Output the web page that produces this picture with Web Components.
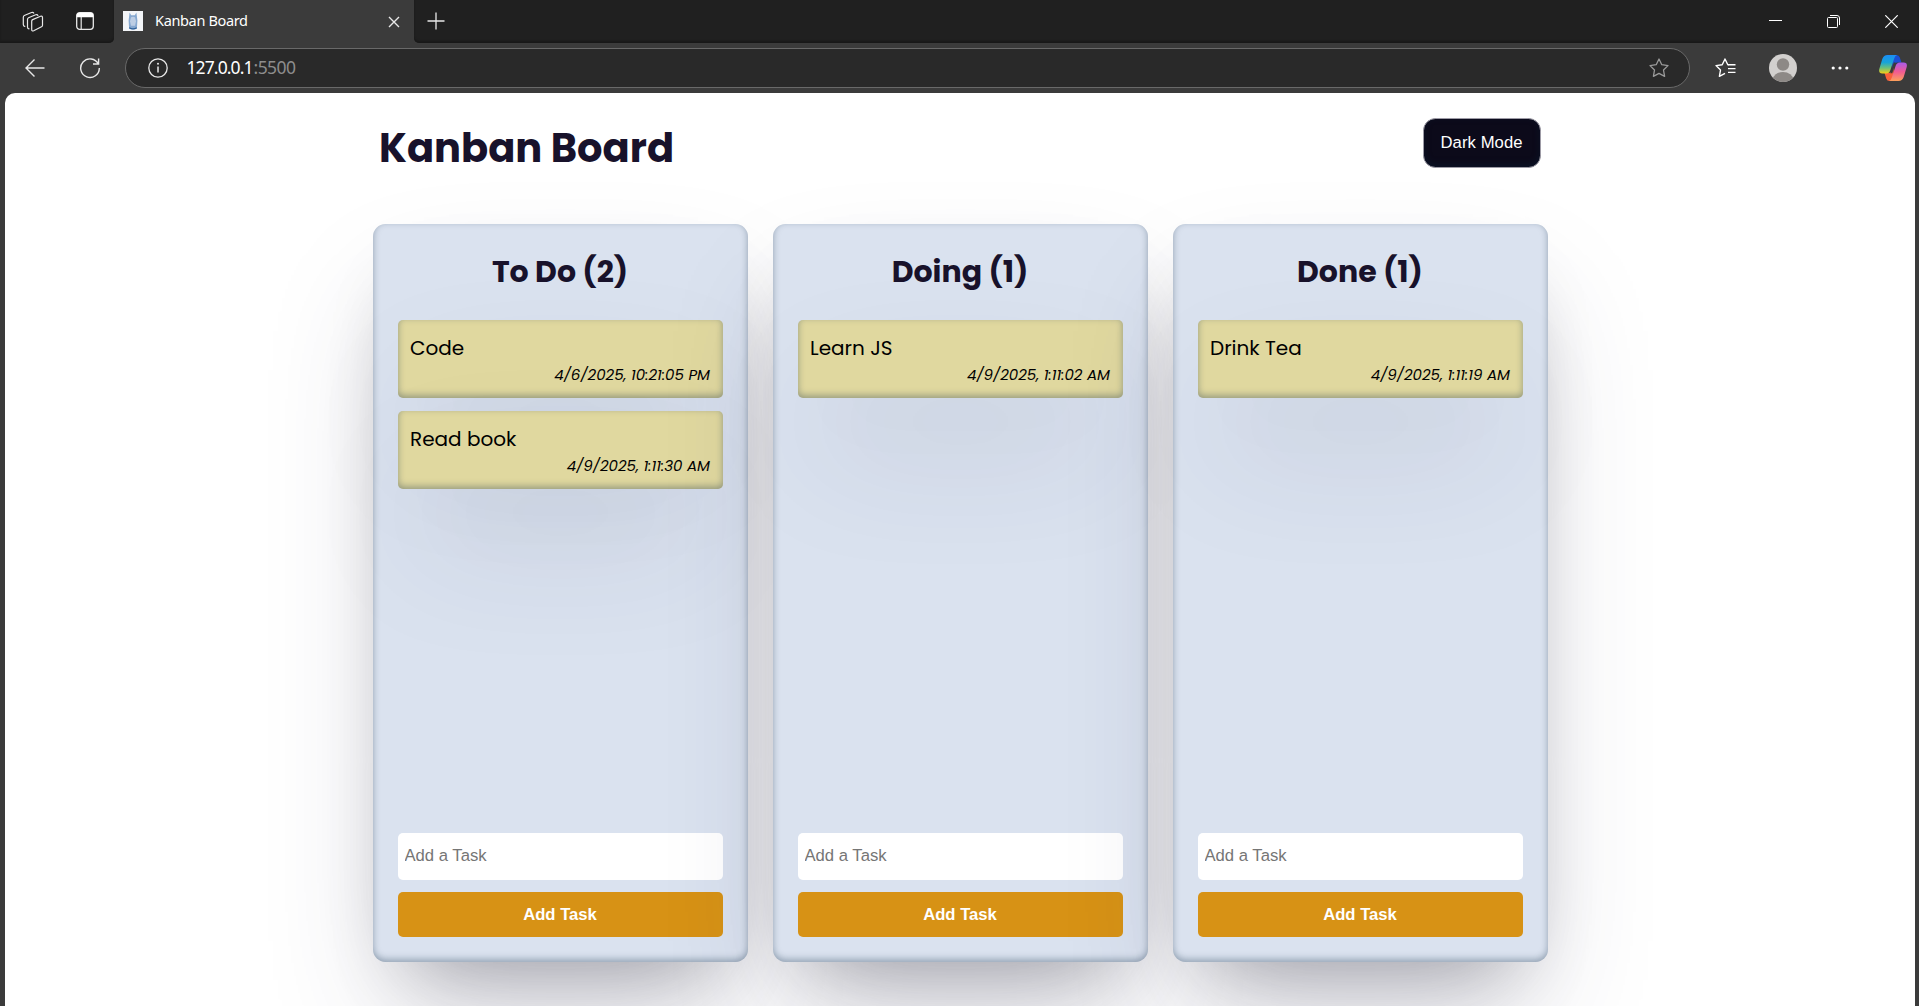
<!DOCTYPE html>
<html lang="en">
<head>
<meta charset="utf-8">
<title>Kanban Board</title>
<style>
html,body{margin:0;height:100%;overflow:hidden;background:#3b3b3b}
</style>
</head>
<body>
<browser-window>
  <kanban-board>
    <kanban-column heading="To Do (2)">
      <task-card label="Code" date="4/6/2025, 10:21:05 PM"></task-card>
      <task-card label="Read book" date="4/9/2025, 1:11:30 AM"></task-card>
    </kanban-column>
    <kanban-column heading="Doing (1)">
      <task-card label="Learn JS" date="4/9/2025, 1:11:02 AM"></task-card>
    </kanban-column>
    <kanban-column heading="Done (1)">
      <task-card label="Drink Tea" date="4/9/2025, 1:11:19 AM"></task-card>
    </kanban-column>
  </kanban-board>
</browser-window>
<script>
const SHADOW = 'rgba(50,50,93,.25) 0 62.5px 125px -25px,rgba(0,0,0,.3) 0 37.5px 75px -37.5px,rgba(10,37,64,.35) 0 -2.5px 7.5px 0 inset';

class Base extends HTMLElement {
  constructor() {
    super();
    this.attachShadow({ mode: 'open' });
  }
  connectedCallback() {
    this.shadowRoot.innerHTML = '<style>:host,*{box-sizing:border-box}' + this.css() + '</style>' + this.html();
  }
}

/* One line of text, tracked so that it fills the given width. */
class FitText extends Base {
  css() { return ':host{display:inline-block;white-space:nowrap}span{display:inline-block}'; }
  html() { return '<span></span>'; }
  connectedCallback() {
    super.connectedCallback();
    const s = this.shadowRoot.querySelector('span');
    const t = this.getAttribute('text');
    const w = +this.getAttribute('width');
    s.textContent = t;
    const gap = (w - s.getBoundingClientRect().width) / (t.length - 1);
    s.style.letterSpacing = gap + 'px';
    s.style.marginRight = -gap + 'px';
  }
}
customElements.define('fit-text', FitText);

class TaskCard extends Base {
  css() {
    return `:host{display:flex;flex-direction:column;flex:none;height:78px;padding:14px 12.5px 0;border-radius:5px;background:#e0d89f;color:#000;
      font-family:Poppins,Inter,sans-serif;box-shadow:${SHADOW}}
      .l{font-size:20px;line-height:28px;height:28px}
      .d{font-size:15px;line-height:26px;font-style:italic;text-align:right}`;
  }
  html() {
    const a = n => this.getAttribute(n);
    return `<div class="l">${a('label')}</div><div class="d">${a('date')}</div>`;
  }
}
customElements.define('task-card', TaskCard);

class KanbanColumn extends Base {
  css() {
    return `:host{display:flex;flex-direction:column;width:375px;height:738px;padding:25px;border-radius:12.5px;background:#dae2ef;box-shadow:${SHADOW}}
      h2{margin:0 0 26px;font:700 30px/45px Poppins,Inter,sans-serif;color:#18122b;text-align:center}
      .tasks{display:flex;flex-direction:column;gap:13px;flex:1}
      input{display:block;width:100%;height:47px;border:0;border-radius:5px;background:#fff;padding:0 7px 1px;font:16.667px "Liberation Sans",Arial,sans-serif;color:#000}
      input::placeholder{color:#757575}
      button{display:block;width:100%;height:45px;margin-top:12px;border:0;border-radius:5px;background:#d79215;color:#fff;font:700 16.667px "Liberation Sans",Arial,sans-serif;padding:0}`;
  }
  html() {
    return `<h2>${this.getAttribute('heading')}</h2>
      <div class="tasks"><slot></slot></div>
      <input placeholder="Add a Task"><button>Add Task</button>`;
  }
}
customElements.define('kanban-column', KanbanColumn);

class KanbanBoard extends Base {
  css() {
    return `:host{display:flex;flex-direction:column;width:1175px;margin:0 auto}
      header{display:flex;justify-content:space-between;align-items:flex-start;height:131px;padding:25px 7px 0 6.5px;flex:none}
      h1{margin:0;font:700 40px/60px Poppins,Inter,sans-serif;color:#18122b}
      button{width:118px;height:49.500px;border:1px solid #9d9ba6;border-radius:12.5px;background:#0c0a1a;color:#fff;font:16.667px "Liberation Sans",Arial,sans-serif;padding:0;
        box-shadow:rgba(10,37,64,.35) 0 -2.5px 7.5px 0 inset}
      main{display:flex;gap:25px}`;
  }
  html() {
    return `<header><h1>Kanban Board</h1><button><fit-text text="Dark Mode" width="82"></fit-text></button></header>
      <main><slot></slot></main>`;
  }
}
customElements.define('kanban-board', KanbanBoard);

const ICONS = {
  workspaces: [22, 22, '<g fill="none" stroke="#e8e8e8" stroke-width="1.2" stroke-linejoin="round" stroke-linecap="round"><path d="M9.700 10.200q0-1.100 1-1.600l7.800-3.300q2-.7 2 1.200v7.700q0 1.100-1 1.600l-7.800 3.900q-2 .9-2-1.200z"/><path d="M7 17.800q-1.500-.3-1.500-1.900V8.500q0-1.200 1-1.700l7.200-3q1.600-.6 2.200.6"/><path d="M2.800 15.300q-1.500-.3-1.500-1.900V6.200q0-1.200 1-1.700l7.200-3q1.600-.6 2.200.6"/></g>'],
  tabs: [18, 18, '<rect x=".7" y=".7" width="16.600" height="16.600" rx="3" fill="none" stroke="#e8e8e8" stroke-width="1.300"/><path d="M.7 5.200V3.500Q.7.700 3.500.700h11q2.800 0 2.800 2.800v1.700z" fill="#fff"/><path d="M5.200 5v12" stroke="#e8e8e8" stroke-width="1.200"/>'],
  favicon: [20, 20, '<rect width="20" height="20" fill="#f3f5f8"/><path d="M6.600 1.500 8.200 4.200h3.600l1.600-2.700 1 8-.5 8q-3.900 1.800-7.800 0l-.5-8z" fill="#86a8d0"/><path d="M8 6.300q2-1.300 4 0l1 4-1 4.500H8L7 10.300z" fill="#bccde4"/><path d="M6.200 16.800q3.800 2.200 7.600 0" stroke="#2f6099" stroke-width="1.300" fill="none"/>'],
  close: [12, 12, '<path d="m1 1 10 10M11 1 1 11" stroke="#e8e8e8" stroke-width="1.400"/>'],
  plus: [18, 18, '<path d="M9 .500v17M.500 9h17" stroke="#e8e8e8" stroke-width="1.300"/>'],
  back: [20, 20, '<path d="M19.500 10H1.200M9.500 1.500 1 10l8.500 8.500" fill="none" stroke="#e8e8e8" stroke-width="1.400"/>'],
  reload: [22, 22, '<path d="M19.300 7A9.300 9.300 0 1 0 20.300 11M19.600 1.500V7H14" fill="none" stroke="#e8e8e8" stroke-width="1.400"/>'],
  info: [20, 20, '<circle cx="10" cy="10" r="9.200" fill="none" stroke="#e8e8e8" stroke-width="1.300"/><path d="M10 8.500v6" stroke="#e8e8e8" stroke-width="1.500"/><circle cx="10" cy="5.800" r="1" fill="#e8e8e8"/>'],
  star: [20, 20, '<path d="m10 1 2.800 5.700 6.200.9-4.500 4.400 1.100 6.300L10 15.400l-5.600 2.900L5.500 12 1 7.600l6.200-.9z" fill="none" stroke="#9a9a9a" stroke-width="1.300" stroke-linejoin="round"/>'],
  favs: [21, 20, '<path d="M13.500 7 12.800 6.700 10 1 7.200 6.700 1 7.600l4.500 4.400-1.100 6.300 5.600-2.900" fill="none" stroke="#fff" stroke-width="1.400" stroke-linejoin="round"/><path d="M13 6.800H20.500M13 10.600H20.500M13 14.400H20.500" stroke="#fff" stroke-width="1.400"/>'],
  avatar: [28, 28, '<defs><clipPath id="c"><circle cx="14" cy="14" r="14"/></clipPath></defs><g clip-path="url(#c)"><rect width="28" height="28" fill="#d2d0ce"/><circle cx="14" cy="10.500" r="6.200" fill="#8d8986"/><ellipse cx="14" cy="25.500" rx="10.200" ry="7.500" fill="#8d8986"/></g>'],
  dots: [18, 4, '<g fill="#fff"><circle cx="2.200" cy="2" r="1.600"/><circle cx="9" cy="2" r="1.600"/><circle cx="15.800" cy="2" r="1.600"/></g>'],
  copilot: [28, 26, '<defs><linearGradient id="a" x1="0" y1="0" x2="0" y2="1"><stop offset="0" stop-color="#1b8df5"/><stop offset=".4" stop-color="#17a4d8"/><stop offset=".7" stop-color="#6cc07a"/><stop offset="1" stop-color="#f4cf15"/></linearGradient><linearGradient id="b" x1="0" y1="0" x2="0" y2="1"><stop offset="0" stop-color="#a85bea"/><stop offset=".5" stop-color="#f15a93"/><stop offset="1" stop-color="#fda05a"/></linearGradient></defs><path d="M13 0h4.500q2.500 0 3.300 2.500L22.500 7.500h-4q-3 0-4 3l-1 3z" fill="#1b4fd4"/><path d="M15 26h-4.500q-2.500 0-3.300-2.500L5.500 18h4q3 0 4-3l1-3z" fill="#f8603a"/><path d="M8.500 0H18q-2 .5-3 4l-3.600 11q-1 3.500-4.300 3.500H3.300Q-.7 18.500.3 14L3.300 4Q4.700 0 8.500 0z" fill="url(#a)"/><path d="M19.500 26H10q2-.5 3-4l3.600-11q1-3.500 4.300-3.500h3.800q4 0 3 4.500l-3 10q-1.400 4-5.200 4z" fill="url(#b)"/><path d="m14.700 7.500-3.300 10.800h1.900l3.300-10.800z" fill="#3b3b3b"/>'],
  min: [13, 13, '<path d="M0 5.500h13" stroke="#fff" stroke-width="1"/>'],
  restore: [13, 13, '<rect x=".500" y="2.500" width="10" height="10" rx="1" fill="none" stroke="#fff"/><path d="M3 .500h7q2.500 0 2.500 2.500v7" fill="none" stroke="#fff"/>'],
  winclose: [13, 13, '<path d="m.300.300 12.400 12.400M12.700.300.300 12.700" stroke="#fff" stroke-width="1.200"/>']
};
class UiIcon extends Base {
  css() { return ':host{display:block;flex:none}svg{display:block}'; }
  html() {
    const [w, h, body] = ICONS[this.getAttribute('name')];
    return `<svg width="${w}" height="${h}" viewBox="0 0 ${w} ${h}">${body}</svg>`;
  }
}
customElements.define('ui-icon', UiIcon);

class BrowserWindow extends Base {
  css() {
    return `:host{display:flex;flex-direction:column;height:1006px;width:1919px;background:#3b3b3b;font-family:"Noto Sans",sans-serif;overflow:hidden}
      .tabs{display:flex;height:43px;background:#3b3b3b;flex:none}
      .left,.rest{background:#202020;box-shadow:inset 0 -2px 2px #191919;display:flex;align-items:center}
      .left{width:114px;border-radius:0 0 5px 0;padding:0 0 0 22px;gap:32px}
      .tab{width:300px;display:flex;align-items:center;padding:0 14px 0 9px;color:#fff;font-size:14.500px;background:#3b3b3b}
      .left ui-icon:nth-child(2){margin-top:-1px}
      .tab fit-text{margin:-3px auto 0 12px}
      .tab ui-icon:first-child{margin-top:-1px}
      .rest{flex:1;border-radius:0 0 0 5px;padding:0 21px 0 13px;gap:45px}
      .rest ui-icon:first-child{margin-right:auto;margin-top:-1px}
      .bar{display:flex;align-items:center;height:50px;padding:0 12px 0 25px;flex:none}
      .url{display:flex;align-items:center;flex:none;width:1565px;height:40px;border:1px solid #696969;border-radius:20px;background:#292929;margin:0 25px 0 24px;padding:0 20px 0 22px;color:#fff;font-size:17.500px}
      .url p{margin:-2px auto 0 18.500px;display:flex}
      .port{color:#8d8d8d}
      .page{flex:1;min-height:0;margin:0 4px 0 5px;background:#fff;border-radius:10px 10px 0 0;overflow:hidden;display:block}`;
  }
  html() {
    return `<div class="tabs"><div class="left"><ui-icon name="workspaces"></ui-icon><ui-icon name="tabs"></ui-icon></div>
      <div class="tab"><ui-icon name="favicon"></ui-icon><fit-text text="Kanban Board" width="93"></fit-text><ui-icon name="close"></ui-icon></div>
      <div class="rest"><ui-icon name="plus"></ui-icon><ui-icon name="min"></ui-icon><ui-icon name="restore"></ui-icon><ui-icon name="winclose"></ui-icon></div></div>
      <div class="bar"><ui-icon name="back"></ui-icon><ui-icon name="reload" style="margin-left:34px"></ui-icon>
      <div class="url"><ui-icon name="info"></ui-icon><p><fit-text text="127.0.0.1" width="67"></fit-text><fit-text class="port" text=":5500" width="42.5"></fit-text></p><ui-icon name="star"></ui-icon></div>
      <ui-icon name="favs"></ui-icon><ui-icon name="avatar" style="margin-left:33px"></ui-icon><ui-icon name="dots" style="margin-left:34px"></ui-icon><ui-icon name="copilot" style="margin-left:30px"></ui-icon></div>
      <div class="page"><slot></slot></div>`;
  }
}
customElements.define('browser-window', BrowserWindow);
</script>
</body>
</html>
